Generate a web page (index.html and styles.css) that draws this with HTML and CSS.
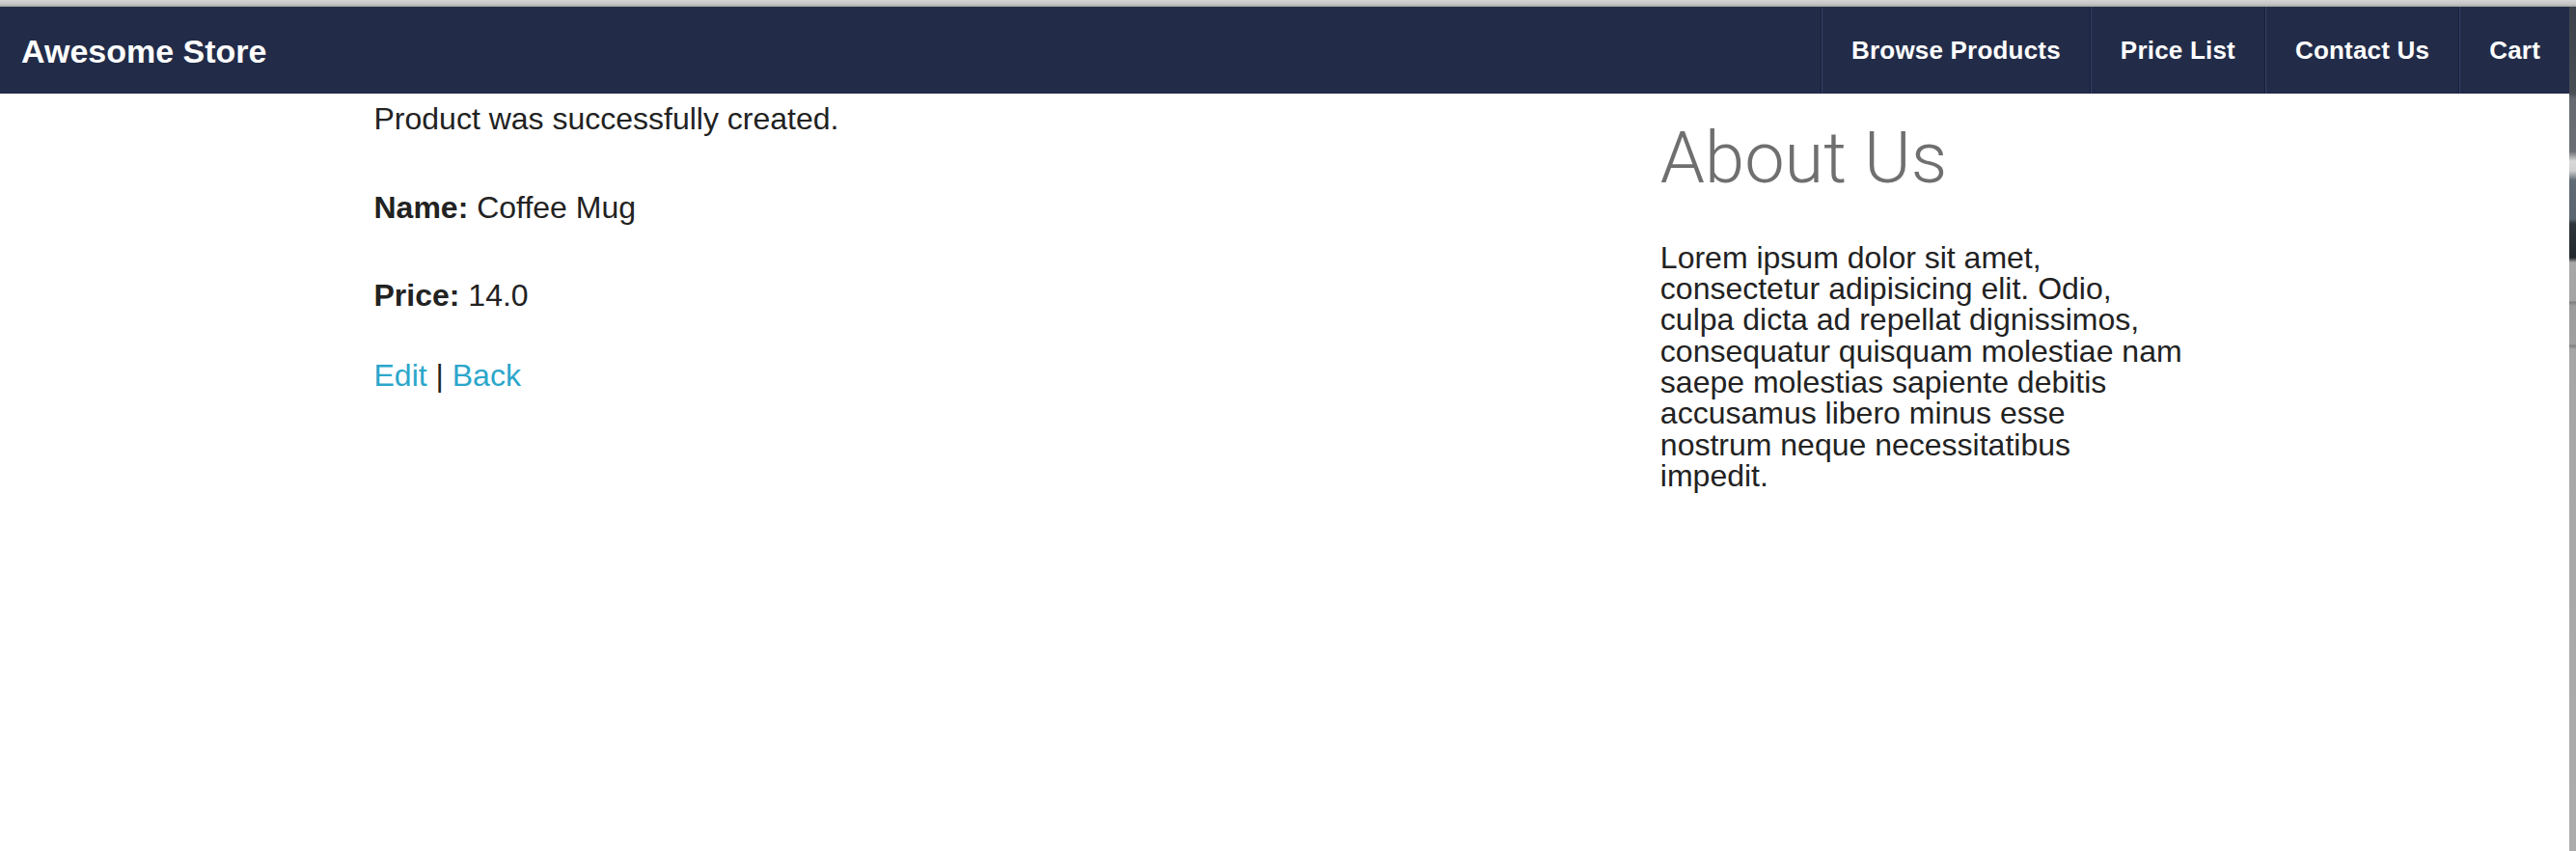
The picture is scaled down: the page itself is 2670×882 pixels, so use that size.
FILE: index.html
```html
<!DOCTYPE html>
<html lang="en">
<head>
<meta charset="utf-8">
<title>Awesome Store</title>
<link rel="stylesheet" href="styles.css">
</head>
<body>
<div class="chrome-top"></div>
<div class="window">
  <div class="page">
    <nav class="top-bar">
      <h1 class="title"><a href="#">Awesome Store</a></h1>
      <ul class="menu">
        <li class="divider"></li>
        <li><a href="#">Browse Products</a></li>
        <li class="divider"></li>
        <li><a href="#">Price List</a></li>
        <li class="divider"></li>
        <li><a href="#">Contact Us</a></li>
        <li class="divider"></li>
        <li><a href="#">Cart</a></li>
      </ul>
    </nav>
    <div class="row">
      <main class="col-main">
        <p class="notice">Product was successfully created.</p>
        <p><strong>Name:</strong> Coffee Mug</p>
        <p><strong>Price:</strong> 14.0</p>
        <div class="actions"><a href="#">Edit</a> | <a href="#">Back</a></div>
      </main>
      <aside class="col-side">
        <h2 class="side-title">About Us</h2>
        <div class="side-text">Lorem ipsum dolor sit amet, consectetur adipisicing elit. Odio, culpa dicta ad repellat dignissimos, consequatur quisquam molestiae nam saepe molestias sapiente debitis accusamus libero minus esse nostrum neque necessitatibus impedit.</div>
      </aside>
    </div>
  </div>
  <div class="edge"></div>
</div>
</body>
</html>
```

FILE: styles.css
```css
html, body {
  margin: 0;
  padding: 0;
  height: 100%;
  background: #ffffff;
}

body {
  font-family: "Liberation Sans", Arial, Helvetica, sans-serif;
  font-size: 32px;
  line-height: 1;
  color: #222222;
  display: flex;
  flex-direction: column;
  overflow: hidden;
}

.chrome-top {
  height: 7px;
  flex: none;
  background: linear-gradient(to bottom, #d4d4d4 0%, #c2c2c2 70%, #9a9a9a 100%);
}

.window {
  flex: 1;
  display: flex;
}

.page {
  flex: 1;
  min-width: 0;
  background: #ffffff;
}

.edge {
  width: 7px;
  flex: none;
  background: linear-gradient(to bottom,
    #3e434b 0px, #4a4e55 90px,
    #676b71 95px, #6b6f74 150px,
    #d8d8d8 160px, #cfcfcf 170px,
    #5f6a74 180px, #5a6570 220px,
    #2f353a 225px, #23282c 260px,
    #a8a8a8 265px, #a4a4a4 305px,
    #7c7c7c 306px, #9c9c9c 310px, #a0a0a0 350px,
    #7c7c7c 351px, #a6a6a6 355px, #acacac 100%);
}

/* top bar */
.top-bar {
  height: 90px;
  display: flex;
  justify-content: space-between;
  background: #222c49;
}

.title {
  margin: 0;
  padding-left: 22px;
  font-size: 34px;
  font-weight: bold;
  line-height: 92px;
}

.title a {
  color: #ffffff;
  text-decoration: none;
}

.menu {
  display: flex;
  list-style: none;
  margin: 0;
  padding: 0;
}

.menu li {
  display: flex;
}

.menu .divider {
  width: 1px;
  border-left: 1px solid #171e35;
  background: #34426a;
}

.menu a {
  padding: 0 30px;
  font-size: 26px;
  font-weight: bold;
  letter-spacing: 0.2px;
  line-height: 90px;
  color: #ffffff;
  text-decoration: none;
}

/* grid */
.row {
  width: 2000px;
  margin: 0 auto;
  display: grid;
  grid-template-columns: 2fr 1fr;
}

.col-main,
.col-side {
  padding: 0 56px;
}

.col-main {
  padding-top: 1px;
}

.col-main p {
  margin: 0 0 40.5px;
  line-height: 51.2px;
}

.actions {
  line-height: 32px;
}

.actions a {
  color: #2ba6cb;
  text-decoration: none;
}

.side-title {
  margin: 23px 0 42px;
  font-family: Roboto, "Liberation Sans", Arial, sans-serif;
  font-size: 74px;
  font-weight: 300;
  line-height: 1.2;
  color: #6f6f6f;
}

.side-text {
  max-width: 542px;
  line-height: 32.3px;
}
```
